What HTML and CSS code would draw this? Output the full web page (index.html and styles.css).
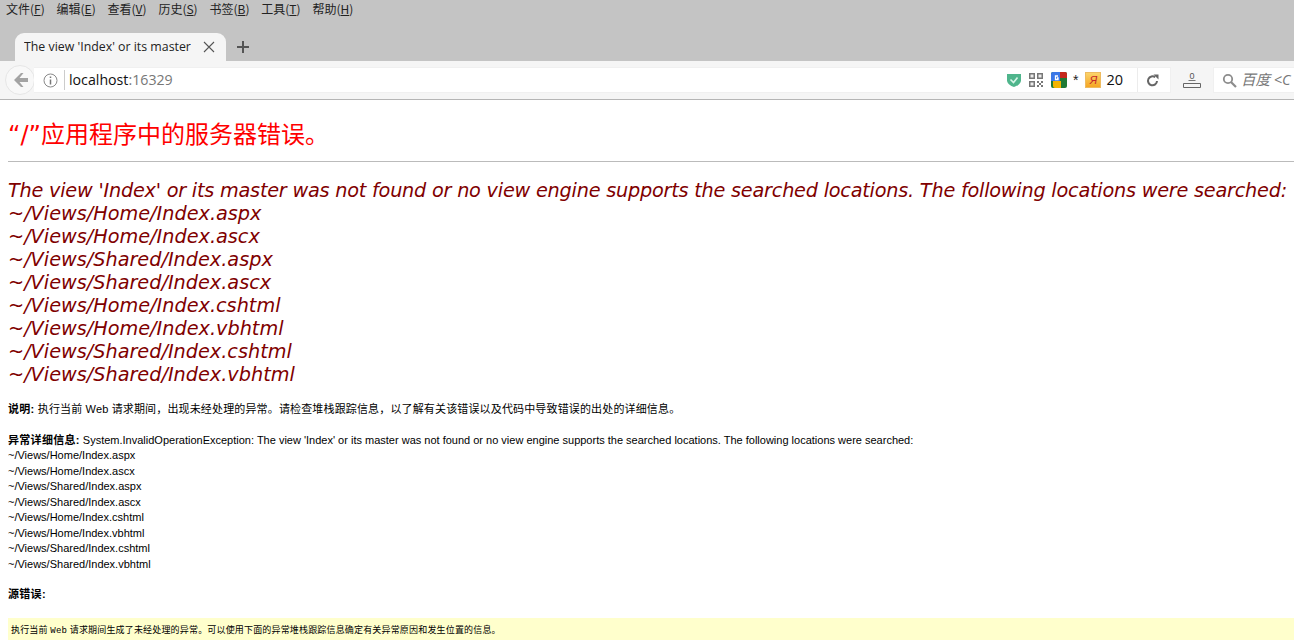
FILE: index.html
```html
<!DOCTYPE html>
<html lang="zh">
<head>
<meta charset="utf-8">
<title>The view 'Index' or its master</title>
<link rel="stylesheet" href="styles.css">
</head>
<body>
<header class="browser">
  <nav class="menubar">
    <span>文件(<u>F</u>)</span><span>编辑(<u>E</u>)</span><span>查看(<u>V</u>)</span><span>历史(<u>S</u>)</span><span>书签(<u>B</u>)</span><span>工具(<u>T</u>)</span><span>帮助(<u>H</u>)</span>
  </nav>
  <div class="tabstrip">
    <div class="tab">
      <span class="tab-title">The view 'Index' or its master</span>
      <svg class="tab-close" width="12" height="12" viewBox="0 0 12 12"><path d="M1 1l10 10M11 1L1 11" stroke="#555" stroke-width="1.1" fill="none"/></svg>
    </div>
    <svg class="newtab" width="14" height="14" viewBox="0 0 14 14"><path d="M7 1v12M1 7h12" stroke="#555" stroke-width="2" fill="none"/></svg>
  </div>
  <div class="toolbar">
    <div class="back">
      <svg width="16" height="14" viewBox="0 0 16 14"><path d="M8 0L1 7l7 7h2.500L6.500 9H15V5H6.500l4-5z" fill="#a3a3a3"/></svg>
    </div>
    <div class="urlbar">
      <svg class="info" width="15" height="15" viewBox="0 0 15 15"><circle cx="7.500" cy="7.500" r="6.500" fill="none" stroke="#8a8a8a" stroke-width="1"/><path d="M7.500 6.500v5M7.500 3.500v1.600" stroke="#777" stroke-width="1.500"/></svg>
      <span class="url"><span class="host">localhost</span>:16329</span>
      <div class="url-icons">
        <svg width="16" height="16" viewBox="0 0 16 16"><path d="M1 2h14v7q-1 4-7 6Q2 13 1 9z" fill="#4fb58c"/><path d="M4.500 7.500l3 3 4-5" stroke="#d8f5e8" stroke-width="1.600" fill="none"/></svg>
        <svg class="qr" width="14" height="14" viewBox="0 0 14 14"><path d="M0 0h6v6H0zM8 0h6v6H8zM0 8h6v6H0z" fill="#777"/><path d="M1.500 1.500h3v3h-3zM9.500 1.500h3v3h-3zM1.500 9.500h3v3h-3z" fill="#eee"/><path d="M8 8h2v2H8zM12 8h2v2h-2zM10 10h2v2h-2zM8 12h2v2H8zM12 12h2v2h-2z" fill="#777"/></svg>
        <svg class="gt" width="16" height="16" viewBox="0 0 16 16"><rect width="16" height="16" rx="2" fill="#1f7a35"/><path d="M0 2q0-2 2-2h7v9H0z" fill="#3b78e7"/><path d="M9 0h5q2 0 2 2v4H9z" fill="#c5281c"/><path d="M2 9h8v7H4q-2 0-2-2z" fill="#f4b400"/><path d="M7 4H4.500v3.500H7V6H6" fill="none" stroke="#fff" stroke-width="1.300"/></svg>
        <span class="star">*</span>
        <span class="ya">Я</span>
        <span class="count">20</span>
      </div>
      <div class="reload">
        <svg width="13" height="13" viewBox="0 0 13 13"><path d="M11 7A4.500 4.500 0 1 1 9.200 3.200" stroke="#666" stroke-width="2" fill="none"/><path d="M7.500 0.500h5v5z" fill="#666"/></svg>
      </div>
    </div>
    <div class="downloads">
      <svg width="18" height="18" viewBox="0 0 18 18"><text x="9" y="8" text-anchor="middle" class="dl-count">0</text><path d="M5.500 9.500h7" stroke="#777" stroke-width="1"/><path d="M0.500 12.500h17v4H0.500z" fill="none" stroke="#666" stroke-width="1"/></svg>
    </div>
    <div class="search">
      <svg class="search-icon" width="15" height="15" viewBox="0 0 15 15"><circle cx="6" cy="6" r="4.200" fill="none" stroke="#8c8c8c" stroke-width="1.800"/><path d="M9 9l5 5" stroke="#8c8c8c" stroke-width="2.200"/></svg>
      <span class="search-text">百度 &lt;C</span>
    </div>
  </div>
</header>
<main class="page">
  <h1>“/”应用程序中的服务器错误。</h1>
  <hr class="rule">
  <h2><span class="h2-lead">The view 'Index' or its master was not found or no view engine supports the searched locations. The following locations were searched:</span><br>~/Views/Home/Index.aspx<br>~/Views/Home/Index.ascx<br>~/Views/Shared/Index.aspx<br>~/Views/Shared/Index.ascx<br>~/Views/Home/Index.cshtml<br>~/Views/Home/Index.vbhtml<br>~/Views/Shared/Index.cshtml<br>~/Views/Shared/Index.vbhtml</h2>
  <p class="desc"><b>说明:</b> 执行当前 Web 请求期间，出现未经处理的异常。请检查堆栈跟踪信息，以了解有关该错误以及代码中导致错误的出处的详细信息。</p>
  <p class="detail"><b>异常详细信息:</b> System.InvalidOperationException: The view 'Index' or its master was not found or no view engine supports the searched locations. The following locations were searched:<br>~/Views/Home/Index.aspx<br>~/Views/Home/Index.ascx<br>~/Views/Shared/Index.aspx<br>~/Views/Shared/Index.ascx<br>~/Views/Home/Index.cshtml<br>~/Views/Home/Index.vbhtml<br>~/Views/Shared/Index.cshtml<br>~/Views/Shared/Index.vbhtml</p>
  <p class="source"><b>源错误:</b></p>
  <div class="codebox">执行当前 <span class="mono">Web</span> 请求期间生成了未经处理的异常。可以使用下面的异常堆栈跟踪信息确定有关异常原因和发生位置的信息。</div>
</main>
</body>
</html>
```
FILE: styles.css
```css
* { box-sizing: border-box; }
html, body { margin: 0; padding: 0; height: 644px; overflow: hidden; background: #fff; }
body { font-family: "Liberation Sans", "Noto Sans CJK SC", sans-serif; color: #000; }

.browser { background: #c4c4c4; }
.menubar { height: 33px; display: flex; gap: 11.800px; padding: 1px 0 0 6px; font-size: 12px; line-height: 16px; color: #222; font-family: "Noto Sans CJK SC", sans-serif; }
.tabstrip { height: 28px; display: flex; align-items: center; padding-left: 15px; }
.tab { width: 211px; height: 28px; background: #f5f5f5; border-radius: 9px 9px 0 0; display: flex; align-items: center; padding: 0 11px 0 9px; justify-content: space-between; }
.tab-title { font: 12.350px/16px "Open Sans", sans-serif; color: #222; white-space: nowrap; overflow: hidden; }
.newtab { margin-left: 10px; }
.toolbar { height: 39px; background: #f5f5f5; border-bottom: 1px solid #b5b5b5; display: flex; align-items: center; padding: 0 0 0 5px; }
.back { width: 30px; height: 30px; border-radius: 50%; background: #f8f8f8; border: 1px solid #e6e6e6; display: flex; align-items: center; justify-content: center; flex: none; padding-left: 2px; }
.urlbar { flex: none; width: 1137px; height: 26px; margin-left: -1px; background: #fff; border: 1px solid #f0f0f0; border-left: 0; display: flex; align-items: center; padding-left: 9px; }
.info { flex: none; }
.url { margin-left: 6px; padding-left: 4px; border-left: 1px solid #ccc; font: 14.200px/20px "Open Sans", sans-serif; color: #777; }
.host { color: #111; }
.url-icons { margin-left: auto; display: flex; align-items: center; gap: 7px; }
.gt { margin-left: 1px; }
.star { font-size: 14px; color: #222; margin-left: -1px; }
.ya { width: 16px; height: 16px; background: linear-gradient(#fbd36b, #f5a623); color: #c62828; border: 1px solid #eebb60; font: italic 11px/14px "Liberation Sans", sans-serif; text-align: center; }
.count { font: 14.500px/16px "Open Sans", sans-serif; color: #111; margin-left: -2px; }
.reload { width: 33px; margin-left: 14px; height: 24px; border-left: 1px solid #ececec; display: flex; align-items: center; justify-content: center; flex: none; padding-right: 3px; }
.downloads { width: 42px; flex: none; display: flex; justify-content: center; }
.dl-count { font: 9px "Liberation Sans", sans-serif; fill: #555; }
.search { flex: 1; min-width: 0; height: 26px; background: #fff; border: 1px solid #f0f0f0; border-right: 0; display: flex; align-items: center; gap: 4px; padding-left: 8px; overflow: hidden; }
.search-icon { flex: none; }
.search-text { font: italic 14.500px/18px "Open Sans", "Noto Sans CJK SC", sans-serif; color: #777; white-space: nowrap; }

.page { padding: 0 0 0 8px; }
h1 { margin: 0; padding-top: 19px; height: 61px; font: 400 24px/32px "DejaVu Sans", "Noto Sans CJK SC", sans-serif; color: #f00; }
.rule { margin: 0; height: 1px; border: 0; background: #bbb; }
h2 { margin: 0; padding-top: 17px; font: italic 400 19.250px/23px "DejaVu Sans", "Noto Sans CJK SC", sans-serif; color: #800000; white-space: nowrap; }
.h2-lead { letter-spacing: -0.220px; }
p { margin: 0; font-size: 11px; line-height: 15.500px; color: #000; }
p b { letter-spacing: 0.300px; }
.desc { padding-top: 16px; letter-spacing: 0.150px; }
.detail { padding-top: 15px; }
.source { padding-top: 15px; }
.codebox { margin-top: 15px; height: 22px; background: #ffffcc; font-size: 9px; line-height: 24px; padding-left: 3px; letter-spacing: 0.170px; }
.mono { font-family: "Liberation Mono", monospace; }
```
